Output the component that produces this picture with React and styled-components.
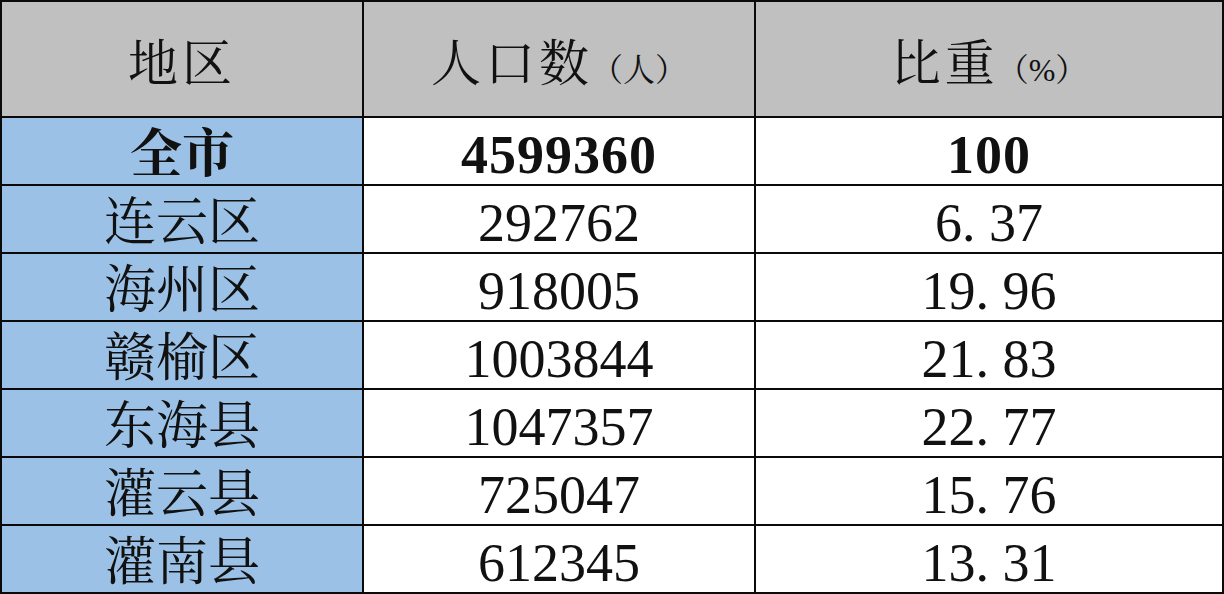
import React from "react";
import styled, { createGlobalStyle } from "styled-components";

const GlobalStyle = createGlobalStyle`
  html, body {
    margin: 0;
    padding: 0;
    background: #ffffff;
  }
  body {
    font-family: "Liberation Serif", "Noto Serif CJK SC", "Noto Sans CJK SC", serif;
  }
`;

const rows = [
  { name: "全市", count: "4599360", share: "100", total: true },
  { name: "连云区", count: "292762", share: "6.37" },
  { name: "海州区", count: "918005", share: "19.96" },
  { name: "赣榆区", count: "1003844", share: "21.83" },
  { name: "东海县", count: "1047357", share: "22.77" },
  { name: "灌云县", count: "725047", share: "15.76" },
  { name: "灌南县", count: "612345", share: "13.31" },
];

const Table = styled.div`
  display: grid;
  grid-template-columns: 360px 390px 466px;
  grid-template-rows: 114px repeat(7, 66px);
  gap: 2px;
  padding: 2px;
  width: 1224px;
  height: 594px;
  box-sizing: border-box;
  background: #0a0a0a;
`;

const cellBg = {
  head: "#c0c0c0",
  region: "#9bc2e6",
  value: "#ffffff",
};

const cellPad = {
  head: "10px",
  region: "7px",
  value: "8px",
};

const Cell = styled.div`
  display: flex;
  align-items: center;
  justify-content: center;
  background: ${(p) => cellBg[p.$kind]};
  color: #111;
  font-size: 52px;
  line-height: 1;
  font-weight: ${(p) => (p.$bold ? 700 : 400)};
  padding-top: ${(p) => cellPad[p.$kind]};
  box-sizing: border-box;
  white-space: nowrap;
  overflow: hidden;
`;

const HeadText = styled.span`
  display: flex;
  align-items: baseline;
  letter-spacing: 4px;
  font-size: 50px;
`;

const Num = styled.span`
  font-family: "Liberation Serif", serif;
  font-size: 54px;
  letter-spacing: ${(p) => (p.$bold ? "1px" : "0")};
`;

const Dot = styled.span`
  display: inline-block;
  width: 0.5em;
`;

const Unit = styled.span`
  font-size: 32px;
  letter-spacing: 0;
  margin-left: -2px;
`;

const Percent = styled.span`
  font-family: "Liberation Serif", serif;
`;

const Share = ({ value, bold }) => {
  const [a, b] = value.split(".");
  return (
    <Num $bold={bold}>
      {a}
      {b !== undefined && (
        <>
          <Dot>.</Dot>
          {b}
        </>
      )}
    </Num>
  );
};

export default function App() {
  return (
    <>
      <GlobalStyle />
      <Table>
        <Cell $kind="head">
          <HeadText>地区</HeadText>
        </Cell>
        <Cell $kind="head">
          <HeadText>
            人口数<Unit>（人）</Unit>
          </HeadText>
        </Cell>
        <Cell $kind="head">
          <HeadText>
            比重<Unit>（<Percent>%</Percent>）</Unit>
          </HeadText>
        </Cell>
        {rows.map((r) => (
          <React.Fragment key={r.name}>
            <Cell $kind="region" $bold={r.total}>
              {r.name}
            </Cell>
            <Cell $kind="value" $bold={r.total}>
              <Num $bold={r.total}>{r.count}</Num>
            </Cell>
            <Cell $kind="value" $bold={r.total}>
              <Share value={r.share} bold={r.total} />
            </Cell>
          </React.Fragment>
        ))}
      </Table>
    </>
  );
}
